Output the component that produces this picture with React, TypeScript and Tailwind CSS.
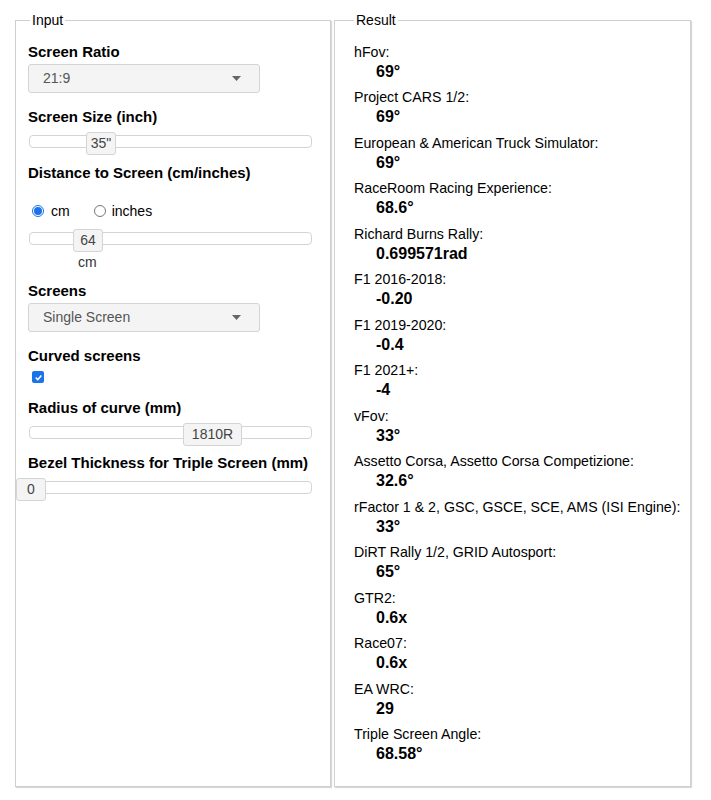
import React from "react";

const font = { fontFamily: '"Liberation Sans", Arial, sans-serif' };

function Label({ children }: { children: React.ReactNode }) {
  return <div className="h-[20px] text-[15px] font-bold leading-[20px] text-black">{children}</div>;
}

function SelectBox({ value }: { value: string }) {
  return (
    <div className="flex h-[29px] w-[232px] items-center justify-between rounded-[3px] border border-[#d4d4d4] bg-[#f4f4f4] pl-[14px] pr-[18px] text-[14px] text-[#555]">
      <span>{value}</span>
      <svg width="9" height="5" viewBox="0 0 9 5">
        <path d="M0 0 H9 L4.5 5 Z" fill="#666" />
      </svg>
    </div>
  );
}

function Slider({ value, left, width }: { value: string; left: number; width: number }) {
  return (
    <div className="relative h-[23px] w-[283px]">
      <div className="absolute left-0 right-0 top-[3px] h-[13px] rounded-[4px] border border-[#d4d4d4] bg-white" />
      <div
        className="absolute top-0 flex h-[23px] items-center justify-center rounded-[3px] border border-[#d4d4d4] bg-[#f4f4f4] text-[14px] text-[#444]"
        style={{ left, width }}
      >
        {value}
      </div>
    </div>
  );
}

const results: [string, string][] = [
  ["hFov:", "69°"],
  ["Project CARS 1/2:", "69°"],
  ["European & American Truck Simulator:", "69°"],
  ["RaceRoom Racing Experience:", "68.6°"],
  ["Richard Burns Rally:", "0.699571rad"],
  ["F1 2016-2018:", "-0.20"],
  ["F1 2019-2020:", "-0.4"],
  ["F1 2021+:", "-4"],
  ["vFov:", "33°"],
  ["Assetto Corsa, Assetto Corsa Competizione:", "32.6°"],
  ["rFactor 1 & 2, GSC, GSCE, SCE, AMS (ISI Engine):", "33°"],
  ["DiRT Rally 1/2, GRID Autosport:", "65°"],
  ["GTR2:", "0.6x"],
  ["Race07:", "0.6x"],
  ["EA WRC:", "29"],
  ["Triple Screen Angle:", "68.58°"],
];

export default function App() {
  return (
    <div className="flex min-h-[800px] bg-white pl-[15px] pt-[10px]" style={font}>
      <fieldset className="h-[777px] w-[316px] border border-[#cfcfcf] shadow-[1px_1px_1px_#d8d8d8]">
        <legend className="ml-[14px] px-[2px] text-[14px] leading-[20px] text-black">Input</legend>
        <div className="flex flex-col pl-[12px] pt-[12px]">
          <Label>Screen Ratio</Label>
          <div className="mt-[2px]">
            <SelectBox value="21:9" />
          </div>
          <div className="mt-[14px]">
            <Label>Screen Size (inch)</Label>
          </div>
          <div className="ml-px mt-[5px]">
            <Slider value={'35"'} left={57} width={30} />
          </div>
          <div className="mt-[8px]">
            <Label>Distance to Screen (cm/inches)</Label>
          </div>
          <div className="mt-[18px] flex h-[20px] items-center text-[14px] text-black">
            <span className="ml-[4px] flex h-[12px] w-[12px] items-center justify-center rounded-full border border-[#1a73e8] bg-white">
              <span className="h-[8px] w-[8px] rounded-full bg-[#1a73e8]" />
            </span>
            <span className="ml-[7px]">cm</span>
            <span className="ml-[24px] h-[12px] w-[12px] rounded-full border border-[#777] bg-white" />
            <span className="ml-[6px]">inches</span>
          </div>
          <div className="ml-px mt-[8px]">
            <Slider value="64" left={44} width={30} />
          </div>
          <div className="ml-[50px] h-[20px] text-[14px] leading-[20px] text-[#333]">cm</div>
          <div className="mt-[9px]">
            <Label>Screens</Label>
          </div>
          <div className="mt-[2px]">
            <SelectBox value="Single Screen" />
          </div>
          <div className="mt-[14px]">
            <Label>Curved screens</Label>
          </div>
          <div className="mt-[5px] flex h-[12px]">
            <span className="ml-[4px] flex h-[12px] w-[12px] items-center justify-center rounded-[2px] bg-[#1a73e8]">
              <svg width="9" height="9" viewBox="0 0 10 10">
                <path d="M2 5.2 L4.2 7.4 L8.2 2.8" fill="none" stroke="white" strokeWidth="1.8" />
              </svg>
            </span>
          </div>
          <div className="mt-[15px]">
            <Label>Radius of curve (mm)</Label>
          </div>
          <div className="ml-px mt-[5px]">
            <Slider value="1810R" left={154} width={59} />
          </div>
          <div className="mt-[7px]">
            <Label>Bezel Thickness for Triple Screen (mm)</Label>
          </div>
          <div className="ml-px mt-[5px]">
            <Slider value="0" left={-13} width={30} />
          </div>
        </div>
      </fieldset>
      <fieldset className="ml-[3px] h-[777px] w-[357px] border border-[#cfcfcf] shadow-[1px_1px_1px_#d8d8d8]">
        <legend className="ml-[19px] px-[2px] text-[14px] leading-[20px] text-black">Result</legend>
        <div className="flex flex-col pl-[19px] pt-[12.5px]">
          {results.map(([k, v]) => (
            <div key={k} className="h-[45.53px]">
              <div className="h-[19px] text-[14.2px] leading-[19px] text-black">{k}</div>
              <div className="h-[19px] pl-[22px] text-[16px] font-bold leading-[19px] text-black">{v}</div>
            </div>
          ))}
        </div>
      </fieldset>
    </div>
  );
}
